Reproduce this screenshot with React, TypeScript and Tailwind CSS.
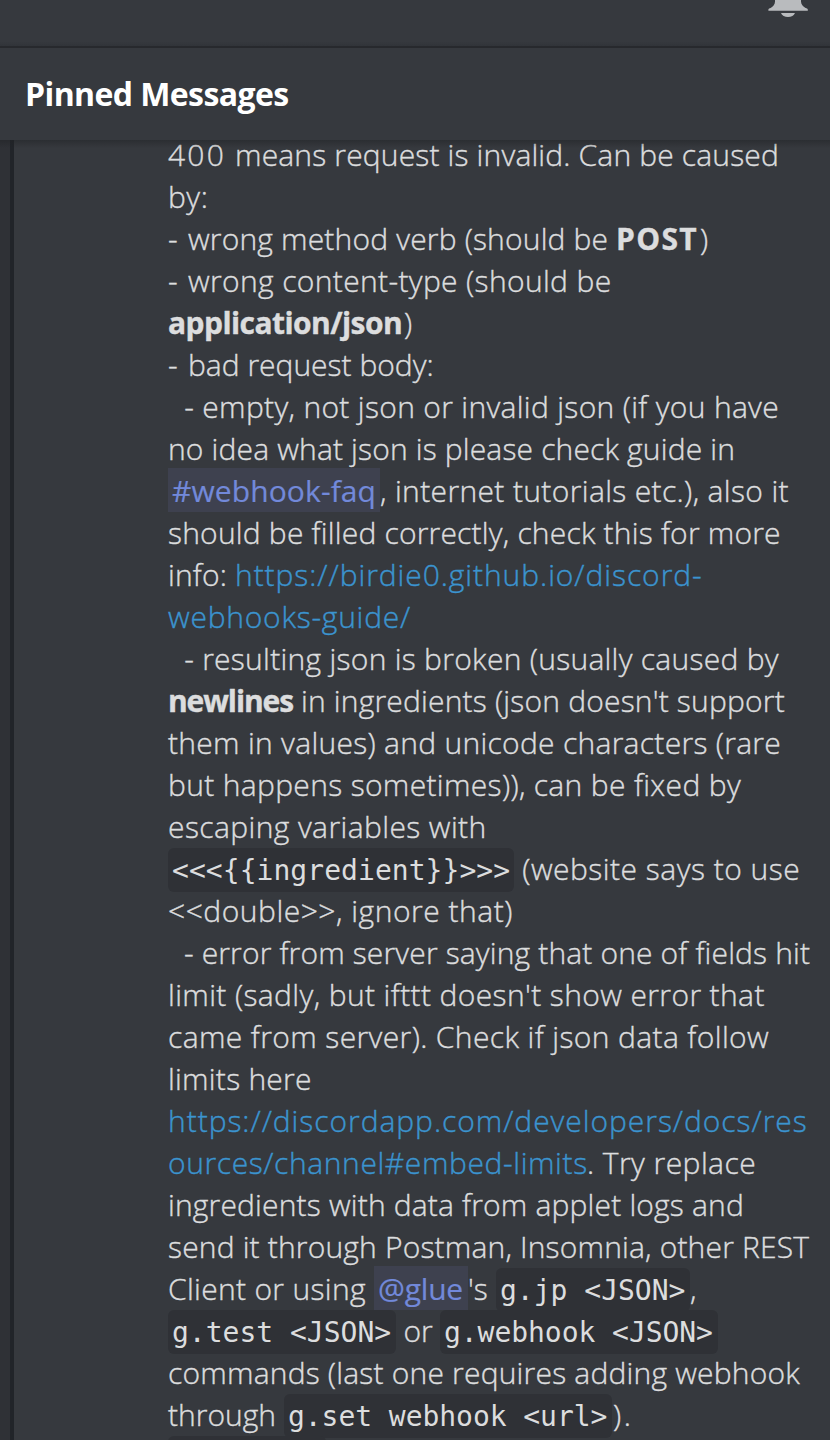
import type { ReactNode } from "react";

function Line({ children }: { children: ReactNode }) {
  return <div className="flex h-[42px] shrink-0 items-start leading-[42px]">{children}</div>;
}

function Text({ s, c }: { s: string; c: string }) {
  return <span className={c}>{s}</span>;
}

function Link({ s, c }: { s: string; c: string }) {
  return <a className={`text-[#3b94cf] ${c}`}>{s}</a>;
}

function Bold({ s, c }: { s: string; c: string }) {
  return <strong className={`font-bold ${c}`}>{s}</strong>;
}

function Mention({ s, c }: { s: string; c: string }) {
  return (
    <span className={`-mt-0.5 h-[44px] bg-[#3e414f] pl-1 leading-[46px] font-medium text-[#7289da] [-webkit-text-stroke:0.2px] ${c}`}>{s}</span>
  );
}

function Code({ s, c }: { s: string; c: string }) {
  return (
    <code
      className={`h-[44px] rounded-md bg-[#2f3136] pl-1 font-['DejaVu_Sans_Mono',monospace] text-[28px] leading-[46px] font-normal [-webkit-text-stroke:0] ${c}`}
    >
      {s}
    </code>
  );
}

export default function App() {
  return (
    <div className="flex h-[1440px] w-[830px] flex-col overflow-hidden bg-[#36393e] font-['Open_Sans',sans-serif] text-[30px] font-light text-[#dcddde]">
      <div className="flex h-12 shrink-0 justify-end border-b-2 border-[#27292d] bg-linear-to-b from-[#36393e] from-90% to-[#313439] pr-[22px]">
        <svg width="40" height="18" viewBox="0 0 40 18" fill="#b9bbbe">
          <path d="M7 0H33v1.500c0 2.800 2 5 4.600 6.500.9.500 2.200.6 2.200 1.500V10.700H.4V9.500c0-.9 1.300-1 2.200-1.500C5.200 6.500 7 4.300 7 1.500Z" />
          <path d="M13 13h14c-1 2.600-3.600 4-7 4s-6-1.400-7-4Z" />
        </svg>
      </div>
      <header className="flex h-[92px] shrink-0 items-center pl-[25px]">
        <h1 className="text-[32px] font-bold tracking-[-0.6px] whitespace-pre text-white">Pinned Messages</h1>
      </header>
      <main className="relative flex h-[1300px] shrink-0 overflow-hidden">
        <div className="w-[14px] shrink-0 border-r-4 border-[#212429] bg-[#2f3136]" />
        <div className="-mt-1.5 ml-[154px] flex flex-col whitespace-pre [-webkit-text-stroke:0.4px]">
          <Line><Text s="400 " c="w-[67px] tracking-[2.2px]" /><Text s="means request is invalid. Can be caused" c="tracking-[0.16px]" /></Line>
          <Line><Text s="by:" c="tracking-[0.5px]" /></Line>
          <Line><Text s="- " c="w-[20px]" /><Text s="wrong method verb (should be " c="w-[428px] tracking-[0.17px]" /><Bold s="POST" c="w-[83px] tracking-[1.35px]" /><Text s=")" c="pl-px" /></Line>
          <Line><Text s="- " c="w-[20px]" /><Text s="wrong content-type (should be" c="tracking-[0.35px]" /></Line>
          <Line><Bold s="application/json" c="w-[235px] tracking-[-0.57px]" /><Text s=")" c="pl-px" /></Line>
          <Line><Text s="- " c="w-[20px]" /><Text s="bad request body:" c="" /></Line>
          <Line><Text s="  - empty, not json or invalid json (if you have" c="tracking-[0.32px]" /></Line>
          <Line><Text s="no idea what json is please check guide in" c="tracking-[0.16px]" /></Line>
          <Line><Mention s="#webhook-faq" c="w-[212px] tracking-[0.1px]" /><Text s=", internet tutorials etc.), also it" c="tracking-[0.36px]" /></Line>
          <Line><Text s="should be filled correctly, check this for more" c="tracking-[0.2px]" /></Line>
          <Line><Text s="info: " c="w-[67px] tracking-[0.16px]" /><Link s="https://birdie0.github.io/discord-" c="tracking-[0.93px]" /></Line>
          <Line><Link s="webhooks-guide/" c="tracking-[0.75px]" /></Line>
          <Line><Text s="  - resulting json is broken (usually caused by" c="tracking-[0.28px]" /></Line>
          <Line><Bold s="newlines" c="w-[125px] tracking-[-1.1px]" /><Text s=" in ingredients (json doesn't support" c="tracking-[0.19px]" /></Line>
          <Line><Text s="them in values) and unicode characters (rare" c="tracking-[0.29px]" /></Line>
          <Line><Text s="but happens sometimes)), can be fixed by" c="tracking-[0.33px]" /></Line>
          <Line><Text s="escaping variables with" c="tracking-[0.4px]" /></Line>
          <Line><Code s="<<<{{ingredient}}>>>" c="w-[346px] tracking-[0.05px]" /><Text s=" (website says to use" c="tracking-[0.48px]" /></Line>
          <Line><Text s="<<double>>, ignore that)" c="tracking-[0.52px]" /></Line>
          <Line><Text s="  - error from server saying that one of fields hit" c="tracking-[0.15px]" /></Line>
          <Line><Text s="limit (sadly, but ifttt doesn't show error that" c="tracking-[0.38px]" /></Line>
          <Line><Text s="came from server). Check if json data follow" c="tracking-[0.38px]" /></Line>
          <Line><Text s="limits here" c="tracking-[0.25px]" /></Line>
          <Line><Link s="https://discordapp.com/developers/docs/res" c="tracking-[0.95px]" /></Line>
          <Line><Link s="ources/channel#embed-limits" c="w-[419px] tracking-[0.6px]" /><Text s=". Try replace" c="tracking-[0.44px]" /></Line>
          <Line><Text s="ingredients with data from applet logs and" c="tracking-[0.17px]" /></Line>
          <Line><Text s="send it through Postman, Insomnia, other REST" c="tracking-[0.17px]" /></Line>
          <Line><Text s="Client or using " c="w-[206px] tracking-[0.32px]" /><Mention s="@glue" c="w-[94px] tracking-[-0.2px]" /><Text s="'s " c="w-[28px]" /><Code s="g.jp <JSON>" c="w-[194px]" /><Text s="," c="" /></Line>
          <Line><Code s="g.test <JSON>" c="w-[228px]" /><Text s=" or " c="w-[44px] tracking-[-0.2px]" /><Code s="g.webhook <JSON>" c="w-[278px] tracking-[-0.05px]" /></Line>
          <Line><Text s="commands (last one requires adding webhook" c="tracking-[0.2px]" /></Line>
          <Line><Text s="through " c="w-[116px]" /><Code s="g.set webhook <url>" c="w-[328px] tracking-[-0.05px]" /><Text s=")." c="pl-px tracking-[2.5px]" /></Line>
          <div className="h-[44px] w-[158px] shrink-0 rounded-md bg-[#2f3136]" />
        </div>
        <div className="absolute inset-x-0 top-0 h-2 bg-linear-to-b from-[#202225]/50 to-transparent" />
      </main>
    </div>
  );
}
